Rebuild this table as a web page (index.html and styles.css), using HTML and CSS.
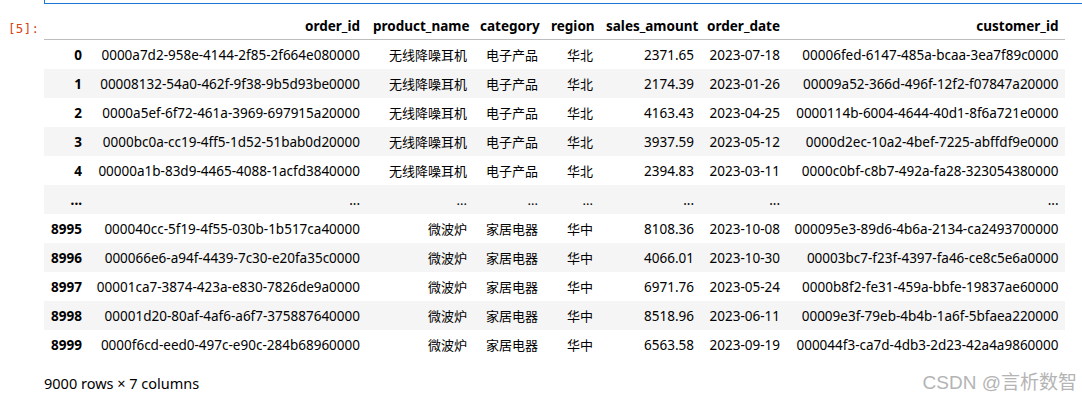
FILE: index.html
```html
<!DOCTYPE html>
<html>
<head>
<meta charset="utf-8">
<link rel="stylesheet" href="styles.css">
</head>
<body>
<div class="prev-cell"></div>
<div class="output">
  <div class="prompt">[5]:</div>
  <div class="content">
    <table class="df">
      <colgroup>
        <col class="c-idx"><col class="c-oid"><col class="c-pn"><col class="c-cat"><col class="c-reg"><col class="c-amt"><col class="c-date"><col class="c-cid">
      </colgroup>
      <thead>
        <tr><th></th><th>order_id</th><th>product_name</th><th>category</th><th>region</th><th>sales_amount</th><th>order_date</th><th>customer_id</th></tr>
      </thead>
      <tbody>
        <tr><th>0</th><td>0000a7d2-958e-4144-2f85-2f664e080000</td><td>无线降噪耳机</td><td>电子产品</td><td>华北</td><td>2371.65</td><td>2023-07-18</td><td>00006fed-6147-485a-bcaa-3ea7f89c0000</td></tr>
        <tr><th>1</th><td>00008132-54a0-462f-9f38-9b5d93be0000</td><td>无线降噪耳机</td><td>电子产品</td><td>华北</td><td>2174.39</td><td>2023-01-26</td><td>00009a52-366d-496f-12f2-f07847a20000</td></tr>
        <tr><th>2</th><td>0000a5ef-6f72-461a-3969-697915a20000</td><td>无线降噪耳机</td><td>电子产品</td><td>华北</td><td>4163.43</td><td>2023-04-25</td><td>0000114b-6004-4644-40d1-8f6a721e0000</td></tr>
        <tr><th>3</th><td>0000bc0a-cc19-4ff5-1d52-51bab0d20000</td><td>无线降噪耳机</td><td>电子产品</td><td>华北</td><td>3937.59</td><td>2023-05-12</td><td>0000d2ec-10a2-4bef-7225-abffdf9e0000</td></tr>
        <tr><th>4</th><td>00000a1b-83d9-4465-4088-1acfd3840000</td><td>无线降噪耳机</td><td>电子产品</td><td>华北</td><td>2394.83</td><td>2023-03-11</td><td>0000c0bf-c8b7-492a-fa28-323054380000</td></tr>
        <tr><th>...</th><td>...</td><td>...</td><td>...</td><td>...</td><td>...</td><td>...</td><td>...</td></tr>
        <tr><th>8995</th><td>000040cc-5f19-4f55-030b-1b517ca40000</td><td>微波炉</td><td>家居电器</td><td>华中</td><td>8108.36</td><td>2023-10-08</td><td>000095e3-89d6-4b6a-2134-ca2493700000</td></tr>
        <tr><th>8996</th><td>000066e6-a94f-4439-7c30-e20fa35c0000</td><td>微波炉</td><td>家居电器</td><td>华中</td><td>4066.01</td><td>2023-10-30</td><td>00003bc7-f23f-4397-fa46-ce8c5e6a0000</td></tr>
        <tr><th>8997</th><td>00001ca7-3874-423a-e830-7826de9a0000</td><td>微波炉</td><td>家居电器</td><td>华中</td><td>6971.76</td><td>2023-05-24</td><td>0000b8f2-fe31-459a-bbfe-19837ae60000</td></tr>
        <tr><th>8998</th><td>00001d20-80af-4af6-a6f7-375887640000</td><td>微波炉</td><td>家居电器</td><td>华中</td><td>8518.96</td><td>2023-06-11</td><td>00009e3f-79eb-4b4b-1a6f-5bfaea220000</td></tr>
        <tr><th>8999</th><td>0000f6cd-eed0-497c-e90c-284b68960000</td><td>微波炉</td><td>家居电器</td><td>华中</td><td>6563.58</td><td>2023-09-19</td><td>000044f3-ca7d-4db3-2d23-42a4a9860000</td></tr>
      </tbody>
    </table>
    <p class="shape">9000 rows × 7 columns</p>
  </div>
</div>
<div class="watermark">CSDN @言析数智</div>
</body>
</html>
```

FILE: styles.css
```css
html, body {
  margin: 0;
  padding: 0;
  background: #ffffff;
}
body {
  width: 1082px;
  height: 404px;
  overflow: hidden;
  position: relative;
  font-family: "Noto Sans", "Noto Sans CJK SC", sans-serif;
  color: #000;
}
.prev-cell {
  margin-left: 44px;
  height: 3px;
  border-left: 1px solid #1976d2;
  border-bottom: 1px solid #1976d2;
}
.output {
  display: flex;
  align-items: flex-start;
}
.prompt {
  width: 44px;
  flex: none;
  box-sizing: border-box;
  padding: 17px 0 0 8px;
  font-family: "DejaVu Sans Mono", "Liberation Mono", monospace;
  font-size: 12.5px;
  line-height: 16px;
  color: #d84315;
  letter-spacing: 0.3px;
}
.content {
  flex: none;
  width: 1021px;
}
.df {
  margin-top: 7px;
  border-collapse: collapse;
  border-spacing: 0;
  table-layout: fixed;
  width: 1021px;
  font-size: 13.5px;
  line-height: 16px;
}
.c-idx { width: 44.5px; }
.c-oid { width: 278px; }
.c-pn { width: 107px; }
.c-cat { width: 71px; }
.c-reg { width: 55px; }
.c-amt { width: 101px; }
.c-date { width: 86px; }
.c-cid { width: 278.5px; }
.df th, .df td {
  padding: 6.5px 6.5px;
  text-align: right;
  white-space: nowrap;
  overflow: hidden;
  vertical-align: middle;
  height: 16px;
}
.df td:nth-child(3), .df td:nth-child(4), .df td:nth-child(5) {
  font-size: 13px;
}
.df th {
  font-weight: bold;
}
.df thead th {
  border-bottom: 1px solid #bdbdbd;
  padding-bottom: 5.5px;
}
.df tbody tr:nth-child(even) {
  background: #f5f5f5;
}
.shape {
  margin: 14px 0 0 0;
  font-size: 14.5px;
  line-height: 20px;
}
.watermark {
  position: absolute;
  right: 5px;
  bottom: 10px;
  font-family: "Liberation Sans", "Noto Sans CJK SC", sans-serif;
  font-size: 19px;
  line-height: 22px;
  color: #b4b4b4;
  text-shadow: 0 0 1px #ffffff;
}
```
